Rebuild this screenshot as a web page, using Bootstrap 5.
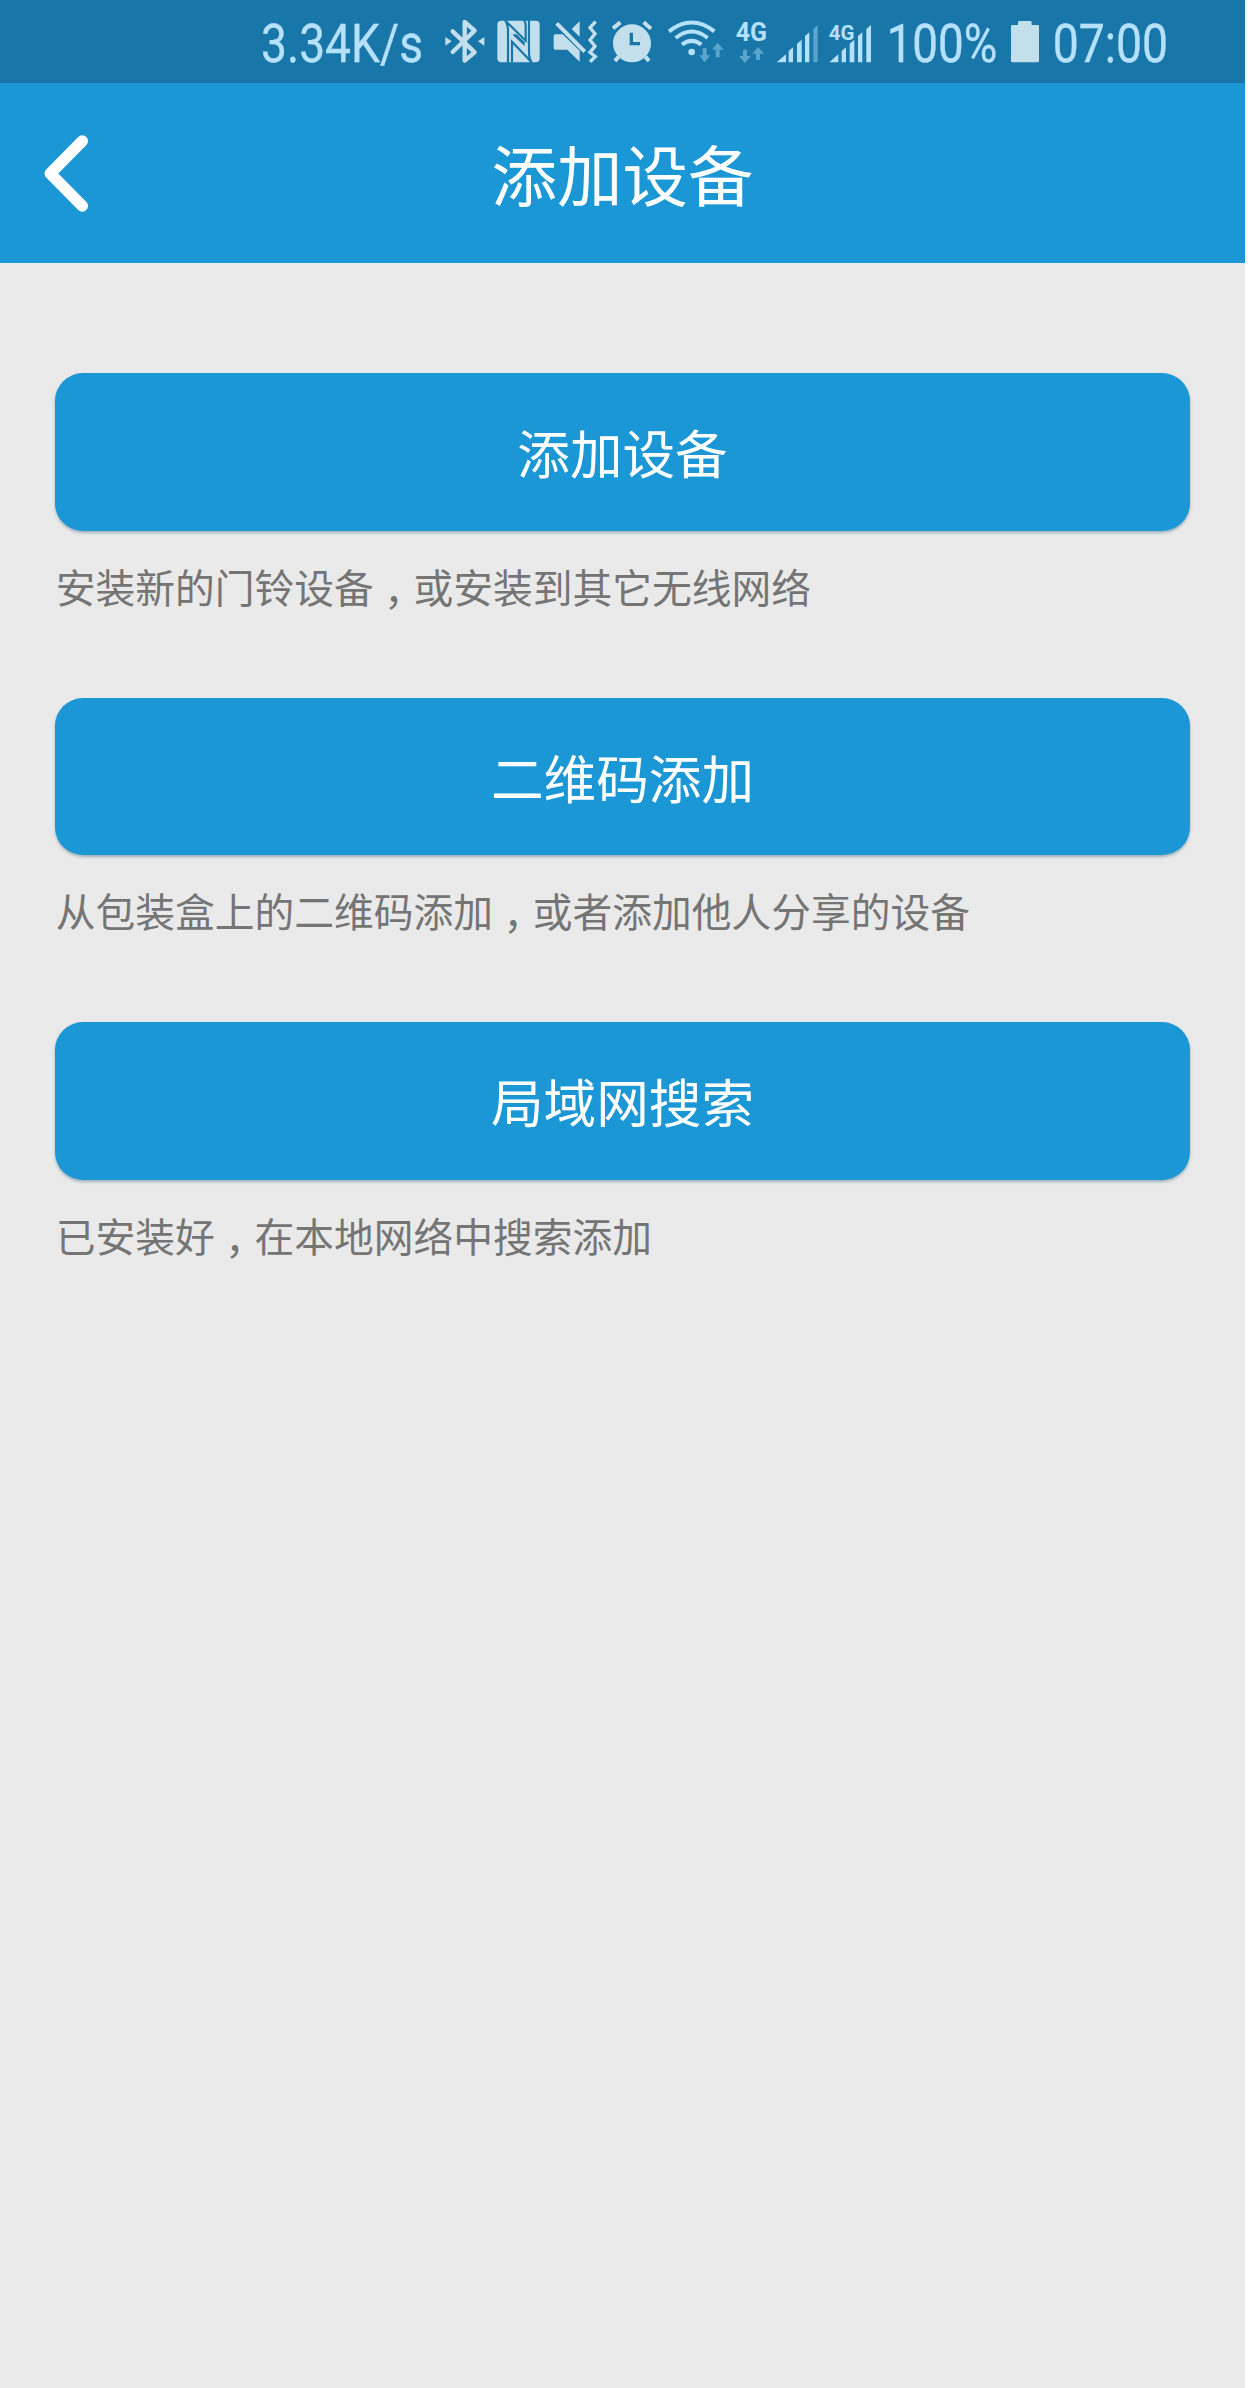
<!DOCTYPE html>
<html lang="zh-CN">
<head>
<meta charset="utf-8">
<meta name="viewport" content="width=device-width, initial-scale=1">
<title>添加设备</title>
<link href="https://cdn.jsdelivr.net/npm/bootstrap@5.3.0/dist/css/bootstrap.min.css" rel="stylesheet">
<style>
  body { background: #fff; font-family: Roboto, "Noto Sans CJK SC", sans-serif; }
  .screen { width: 1245px; height: 2388px; background: #eaeaea; font-family: "Noto Sans CJK SC", sans-serif; }
  .status-bar { height: 83px; background: #1976a9; padding-right: 70px; color: #b5e1fb; }
  .status-bar svg { display: block; height: 83px; flex: none; fill: currentColor; font-family: Roboto, sans-serif; overflow: visible; }
  .status-bar .soft { color: #c3dfec; }
  .status-bar .reading { stroke: currentColor; stroke-width: 1; }
  .dim { fill: #59a5cc; }
  .app-bar { height: 180px; background: #1c97d6; color: #fff; display: grid; grid-template-columns: 130px 1fr 130px; }
  .app-title { font-size: 65.5px; line-height: 90px; margin-top: -1px; }
  .actions { padding: 110px 55px 0 55px; }
  .action-item { height: 324.5px; }
  .btn-action { height: 157.5px; border: 0; border-radius: 28px; background: #1c97d6; color: #fff; font-size: 52.6px; line-height: 78px; box-shadow: 0 2px 3px rgba(40,90,120,.4); }
  .btn-action:hover { background: #1c97d6; color: #fff; }
  .btn-action span { display: block; margin-top: -1px; }
  .hint { font-size: 39.75px; line-height: 58px; margin-top: 26px; padding-left: .7px; color: #757575; white-space: nowrap; }
  .cm { font-family: "Noto Sans CJK TC", sans-serif; line-height: 0; vertical-align: -.36em; }
</style>
</head>
<body>
<div class="screen d-flex flex-column">
  <div class="status-bar d-flex justify-content-end">
    <svg width="180" viewBox="54 0 540 249"><text class="reading" x="63" y="185" font-size="160" textLength="486" lengthAdjust="spacingAndGlyphs">3.34K/s</text></svg>
    <svg class="soft" width="52" viewBox="24 0 156 249">
      <path d="M68 94 134 157 104 182V66L134 92 68 156" fill="none" stroke="currentColor" stroke-width="13" stroke-linejoin="round" stroke-linecap="round"/>
      <path d="M46 111 65 124 46 137zM163 111 144 124 163 137z"/>
    </svg>
    <svg class="soft" width="55" viewBox="180 0 165 249">
      <rect x="202" y="62" width="127" height="125" rx="12"/>
      <path d="M224 59Q234 71 234 94V190M229 65 287 122V76Q287 66 281 58M307 190Q297 178 297 155V58M302 184 246 125V187" fill="none" stroke="#1976a9" stroke-width="6.5"/>
      <path d="M249 106 284 138V127L260 103H249z" fill="#1976a9"/>
    </svg>
    <svg class="soft" width="60" viewBox="345 0 180 249">
      <path d="M376 103H398L449 152V185L412 149H376Q371 149 371 144V108Q371 103 376 103zM449 64V110L425 87z"/>
      <path d="M380 70 464 155" fill="none" stroke="currentColor" stroke-width="12"/>
      <path d="M497 65 480 83 495 101 480 120 495 139 480 157 496 170 480 185" fill="none" stroke="currentColor" stroke-width="10"/>
    </svg>
    <svg class="soft" width="55" viewBox="525 0 165 249">
      <circle cx="606" cy="130" r="57"/>
      <path d="M549 85 571 67M641 67 663 86M566 170 555 183M646 170 657 183" stroke="currentColor" stroke-width="12"/>
      <path d="M604 98V131H630" fill="none" stroke="#1976a9" stroke-width="10"/>
    </svg>
    <svg width="70" viewBox="0 0 210 249">
      <g fill="none" stroke="currentColor" stroke-width="12"><path d="M27 94Q95 41 163 94M47 114Q95 75 143 114M66 134Q95 111 124 134"/></g>
      <circle cx="95" cy="156" r="10"/>
      <path class="dim" d="M128 144H140V166H151L134 187 117 166H128zM167 172V149H156L173 128 191 149H179V172z"/>
    </svg>
    <svg width="42" viewBox="210 0 126 249">
      <text x="227" y="122" font-size="76" font-weight="700" textLength="94" lengthAdjust="spacingAndGlyphs">4G</text>
      <path class="dim" d="M249 149H261V168H273L255 189 237 168H249zM288 180V161H277L294 141 312 161H300V180z"/>
    </svg>
    <svg width="50" viewBox="336 0 150 249">
      <path d="M350 187 378 163V187zM386 187V153L399 142V187zM411 187V131L425 119V187zM435 187V108L448 97V187z"/>
      <path class="dim" d="M460 187V87L473 75V187z"/>
    </svg>
    <svg width="56" viewBox="486 0 168 249">
      <path d="M508 187 535 163V187zM545 187V153L558 142V187zM569 187V131L583 119V187zM594 187V108L607 97V187zM619 187V87L633 75V187z"/>
      <text x="506" y="120" font-size="62" font-weight="700" textLength="77" lengthAdjust="spacingAndGlyphs">4G</text>
    </svg>
    <svg width="127" viewBox="-6 0 381 249"><text class="reading" x="20" y="185" font-size="160" textLength="332" lengthAdjust="spacingAndGlyphs">100%</text></svg>
    <svg class="soft" width="40" viewBox="375 0 120 249"><path d="M397 75H414V67Q414 63 418 63H451Q455 63 455 67V75H473Q477 75 477 79V183Q477 187 473 187H397Q393 187 393 183V79Q393 75 397 75z"/></svg>
    <svg width="130" viewBox="495 0 390 249"><text class="reading" x="518" y="185" font-size="160" textLength="346" lengthAdjust="spacingAndGlyphs">07:00</text></svg>
  </div>
  <header class="app-bar align-items-center">
    <svg width="130" height="180" viewBox="0 0 130 180" fill="none" stroke="#fff" stroke-width="11.5" stroke-linecap="round" stroke-linejoin="round"><path d="M82.3 58 50.3 90.5 82.3 123"/></svg>
    <div class="app-title text-center">添加设备</div>
  </header>
  <main class="actions">
    <section class="action-item">
      <button type="button" class="btn btn-action w-100 p-0"><span>添加设备</span></button>
      <p class="hint mb-0">安装新的门铃设备<span class="cm" lang="zh-TW">，</span>或安装到其它无线网络</p>
    </section>
    <section class="action-item">
      <button type="button" class="btn btn-action w-100 p-0"><span>二维码添加</span></button>
      <p class="hint mb-0">从包装盒上的二维码添加<span class="cm" lang="zh-TW">，</span>或者添加他人分享的设备</p>
    </section>
    <section class="action-item">
      <button type="button" class="btn btn-action w-100 p-0"><span>局域网搜索</span></button>
      <p class="hint mb-0">已安装好<span class="cm" lang="zh-TW">，</span>在本地网络中搜索添加</p>
    </section>
  </main>
</div>
<script src="https://cdn.jsdelivr.net/npm/bootstrap@5.3.0/dist/js/bootstrap.bundle.min.js"></script>
</body>
</html>
